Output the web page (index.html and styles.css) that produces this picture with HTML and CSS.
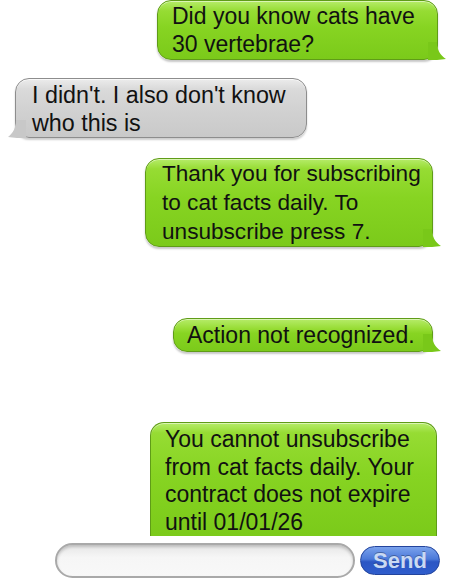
FILE: index.html
```html
<!DOCTYPE html>
<html>
<head>
<meta charset="utf-8">
<link rel="stylesheet" href="styles.css">
</head>
<body>
<div class="thread">
  <div class="row out r1"><div class="bubble green b1">Did you know cats have 30 vertebrae?</div></div>
  <div class="row in r2"><div class="bubble gray b2">I didn't. I also don't know who this is</div></div>
  <div class="row out r3"><div class="bubble green b3">Thank you for subscribing to cat facts daily. To unsubscribe press 7.</div></div>
  <div class="row out r4"><div class="bubble green b4">Action not recognized.</div></div>
  <div class="row out r5"><div class="bubble green b5 cut">You cannot unsubscribe from cat facts daily. Your contract does not expire until 01/01/26</div></div>
</div>
<div class="composer">
  <div class="field"></div>
  <div class="send">Send</div>
</div>
</body>
</html>
```
FILE: styles.css
```css
html, body {
  margin: 0;
  padding: 0;
  background: #ffffff;
}
body {
  width: 450px;
  height: 588px;
  overflow: hidden;
  font-family: "Liberation Sans", Arial, sans-serif;
}
.thread {
  display: flex;
  flex-direction: column;
}
.row {
  display: flex;
}
.row.out { justify-content: flex-end; }
.row.in { justify-content: flex-start; }

.r1 { padding-right: 12px; }
.r2 { padding-left: 15px; margin-top: 18px; }
.r3 { padding-right: 17px; margin-top: 20px; }
.r4 { padding-right: 17px; margin-top: 71px; }
.r5 { padding-right: 13px; margin-top: 70px; }

.bubble {
  position: relative;
  box-sizing: border-box;
  font-size: 23px;
  line-height: 28px;
  color: #111111;
  padding: 2px 8px 3px 14px;
  border-radius: 14px;
}
.green {
  background: linear-gradient(#b6ec6a 0, #96dc33 10px, #87d422 45%, #7bca1a 100%);
  border: 1px solid #5f9c17;
  box-shadow: 0 2px 2px rgba(0,0,0,0.22), inset 0 1px 0 rgba(255,255,255,0.5);
}
.green::after {
  content: "";
  position: absolute;
  right: -9px;
  bottom: -1px;
  width: 18px;
  height: 18px;
  background: #79c819;
  clip-path: path('M0 0 L9 0 C9 8 12 13 18 17 C12 18 6 18 0 18 Z');
}
.gray {
  background: linear-gradient(#ececec 0, #dadada 10px, #d2d2d2 50%, #c9c9c9 100%);
  border: 1px solid #8d8d8d;
  box-shadow: 0 2px 2px rgba(0,0,0,0.2), inset 0 1px 0 rgba(255,255,255,0.7);
  padding-left: 16px;
}
.gray::after {
  content: "";
  position: absolute;
  left: -8px;
  bottom: -1px;
  width: 18px;
  height: 18px;
  background: #c8c8c8;
  clip-path: path('M18 0 L8 0 C8 8 5 13 0 17 C6 18 12 18 18 18 Z');
}

.b1 { width: 281px; height: 60px; padding-top: 1px; }
.b2 { width: 292px; height: 60px; font-size: 23.3px; }
.b3 { width: 288px; height: 89px; line-height: 29px; padding-top: 0; padding-left: 16px; font-size: 22.6px; }
.b4 { width: 260px; height: 34px; padding-left: 13px; }
.b5 { width: 287px; padding-left: 14px; line-height: 27.5px; padding-top: 3px; padding-bottom: 0; }
.cut {
  border-radius: 14px 14px 0 0;
  border-bottom: none;
  box-shadow: inset 0 1px 0 rgba(255,255,255,0.5);
}
.cut::after { display: none; }

.composer {
  display: flex;
  align-items: center;
  margin-top: 7px;
  padding-left: 55px;
  gap: 5px;
}
.field {
  box-sizing: border-box;
  width: 300px;
  height: 35px;
  border-radius: 18px;
  border: 2px solid #a9a9a9;
  background: linear-gradient(#e6e6e6, #f6f6f6 40%, #f8f8f8);
  box-shadow: inset 0 2px 3px rgba(0,0,0,0.18), 0 1px 0 #ffffff;
}
.send {
  box-sizing: border-box;
  width: 80px;
  height: 29px;
  border-radius: 15px;
  border: 1px solid #23449c;
  background: linear-gradient(#7aa2ec 0, #4b79d9 45%, #2b56c4 55%, #2f5dcc 100%);
  color: #c9d9f3;
  font-weight: bold;
  font-size: 22px;
  line-height: 27px;
  text-align: center;
  text-shadow: 0 -1px 0 rgba(0,0,0,0.3);
}
```
